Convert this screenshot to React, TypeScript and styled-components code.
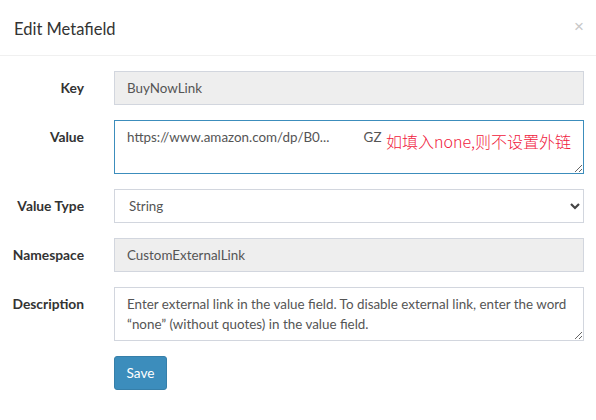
import React from "react";
import styled, { createGlobalStyle } from "styled-components";

const Global = createGlobalStyle`
  html, body { margin: 0; padding: 0; background: #fff; }
  body { font-family: "Lato", "Liberation Sans", sans-serif; color: #333; }
  * { box-sizing: border-box; }
`;

const Modal = styled.div`
  width: 596px;
  height: 420px;
  background: #fff;
`;

const Header = styled.div`
  height: 56px;
  border-bottom: 1px solid #f0f0f0;
  display: flex;
  align-items: flex-start;
  justify-content: space-between;
  padding: 17px 12px 0 14px;
`;

const Title = styled.h4`
  margin: 0;
  font-size: 16.5px;
  font-weight: 400;
  line-height: 24px;
  color: #333;
`;

const Close = styled.button`
  border: 0;
  background: none;
  padding: 0;
  margin-top: 0;
  color: #c8c8c8;
  font-size: 17px;
  line-height: 20px;
  font-family: "Liberation Sans", sans-serif;
  cursor: pointer;
`;

const Body = styled.form`
  padding: 15px 12px 0 0;
  display: flex;
  flex-direction: column;
  gap: 15px;
`;

const Row = styled.div`
  display: grid;
  grid-template-columns: 84px 1fr;
  column-gap: 30px;
  align-items: start;
`;

const Label = styled.label`
  text-align: right;
  font-weight: 700;
  font-size: 13.8px;
  color: #333;
  padding-top: 9px;
  line-height: 16px;
  white-space: nowrap;
`;

const fieldBase = `
  width: 100%;
  border: 1px solid #d2d6de;
  font-family: "Lato", "Liberation Sans", sans-serif;
  font-size: 13.4px;
  color: #555;
  outline: none;
  border-radius: 0;
`;

const Input = styled.input`
  ${fieldBase}
  height: 34px;
  padding: 6px 12px;
  background: ${(p) => (p.readOnly ? "#eeeeee" : "#fff")};
`;

const Area = styled.textarea<{ $focus?: boolean }>`
  ${fieldBase}
  display: block;
  height: 54px;
  padding: 6px 12px;
  line-height: 20px;
  border-color: ${(p) => (p.$focus ? "#3c8dbc" : "#d2d6de")};
  resize: vertical;
  white-space: pre-wrap;
`;

const Field = styled.div`
  position: relative;
`;

const Note = styled.span`
  position: absolute;
  left: 272px;
  top: 10px;
  font-family: "Noto Sans CJK SC", "Noto Sans", sans-serif;
  font-size: 16px;
  font-weight: 300;
  line-height: 22px;
  color: #f0203c;
  pointer-events: none;
`;

const Select = styled.select`
  ${fieldBase}
  height: 34px;
  padding: 6px 14px;
  background: #fff;
  appearance: none;
  -webkit-appearance: none;
`;

const Chevron = styled.svg`
  position: absolute;
  right: 3px;
  top: 12px;
  pointer-events: none;
`;

const Button = styled.button`
  width: 53px;
  height: 34px;
  background: #3c8dbc;
  border: 1px solid #367fa9;
  border-radius: 3px;
  color: #fff;
  font-family: "Lato", "Liberation Sans", sans-serif;
  font-size: 13.6px;
  padding: 0;
`;

export default function App() {
  return (
    <Modal>
      <Global />
      <Header>
        <Title>Edit Metafield</Title>
        <Close type="button">×</Close>
      </Header>
      <Body onSubmit={(e) => e.preventDefault()}>
        <Row>
          <Label>Key</Label>
          <Input readOnly defaultValue="BuyNowLink" />
        </Row>
        <Row>
          <Label>Value</Label>
          <Field>
            <Area
              $focus
              defaultValue={"https://www.amazon.com/dp/B0...          GZ"}
            />
            <Note>如填入none,则不设置外链</Note>
          </Field>
        </Row>
        <Row>
          <Label>Value Type</Label>
          <Field>
            <Select defaultValue="String">
              <option>String</option>
              <option>Integer</option>
              <option>JSON</option>
            </Select>
            <Chevron width="12" height="10" viewBox="0 0 12 10">
              <path d="M2 3 L6 7 L10 3" fill="none" stroke="#444" strokeWidth="2.2" />
            </Chevron>
          </Field>
        </Row>
        <Row>
          <Label>Namespace</Label>
          <Input readOnly defaultValue="CustomExternalLink" />
        </Row>
        <Row>
          <Label>Description</Label>
          <Area
            defaultValue={
              "Enter external link in the value field. To disable external link, enter the word “none” (without quotes) in the value field."
            }
          />
        </Row>
        <Row>
          <span />
          <div>
            <Button type="submit">Save</Button>
          </div>
        </Row>
      </Body>
    </Modal>
  );
}
